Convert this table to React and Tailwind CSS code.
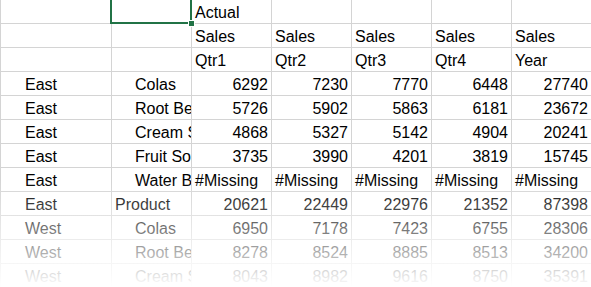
const cols = ['w-[111px]', 'w-[80px]', 'w-[80px]', 'w-[80px]', 'w-[80px]', 'w-[80px]', 'w-[80px]'];

const header = [
  ['', '', 'Actual', '', '', '', ''],
  ['', '', 'Sales', 'Sales', 'Sales', 'Sales', 'Sales'],
  ['', '', 'Qtr1', 'Qtr2', 'Qtr3', 'Qtr4', 'Year'],
];

// region, product, indent product?, values
const rows = [
  ['East', 'Colas', true, [6292, 7230, 7770, 6448, 27740]],
  ['East', 'Root Beer', true, [5726, 5902, 5863, 6181, 23672]],
  ['East', 'Cream Soda', true, [4868, 5327, 5142, 4904, 20241]],
  ['East', 'Fruit Soda', true, [3735, 3990, 4201, 3819, 15745]],
  ['East', 'Water Bottled', true, ['#Missing', '#Missing', '#Missing', '#Missing', '#Missing']],
  ['East', 'Product', false, [20621, 22449, 22976, 21352, 87398]],
  ['West', 'Colas', true, [6950, 7178, 7423, 6755, 28306]],
  ['West', 'Root Beer', true, [8278, 8524, 8885, 8513, 34200]],
  ['West', 'Cream Soda', true, [8043, 8982, 9616, 8750, 35391]],
];

function Cell({ w, children, align = 'left', className = '' }) {
  return (
    <div
      className={`${w} h-[24px] shrink-0 border-r border-b border-[#d4d4d4] flex items-end overflow-hidden whitespace-nowrap leading-[20px] ${
        align === 'right' ? 'justify-end pr-[3px]' : 'justify-start pl-[3px]'
      } ${className}`}
    >
      {children}
    </div>
  );
}

export default function App() {
  return (
    <div
      className="relative w-[591px] h-[287px] overflow-hidden bg-white text-[16px] text-black"
      style={{ fontFamily: '"Liberation Sans", Arial, sans-serif' }}
    >
      <div className="flex flex-col border-l border-[#d4d4d4] w-max">
        {header.map((r, i) => (
          <div key={i} className="flex">
            {r.map((t, j) => (
              <Cell key={j} w={cols[j]}>{t}</Cell>
            ))}
          </div>
        ))}
        {rows.map(([region, product, indent, vals], i) => (
          <div key={i} className="flex">
            <Cell w={cols[0]} className="pl-[24px]">{region}</Cell>
            <Cell w={cols[1]} className={indent ? 'pl-[23px]' : ''}>{product}</Cell>
            {vals.map((v, j) => (
              <Cell key={j} w={cols[j + 2]} align={typeof v === 'number' ? 'right' : 'left'}>
                {v}
              </Cell>
            ))}
          </div>
        ))}
      </div>

      {/* selected cell */}
      <div className="absolute left-[110px] top-[-3px] w-[82px] h-[27px] border-2 border-[#217346]" />
      <div className="absolute left-[188px] top-[20px] w-[7px] h-[7px] bg-[#217346] border border-white" />

      {/* fade out */}
      <div className="absolute left-0 right-0 top-[179px] h-[108px] bg-linear-to-b from-white/0 to-white" />
    </div>
  );
}
